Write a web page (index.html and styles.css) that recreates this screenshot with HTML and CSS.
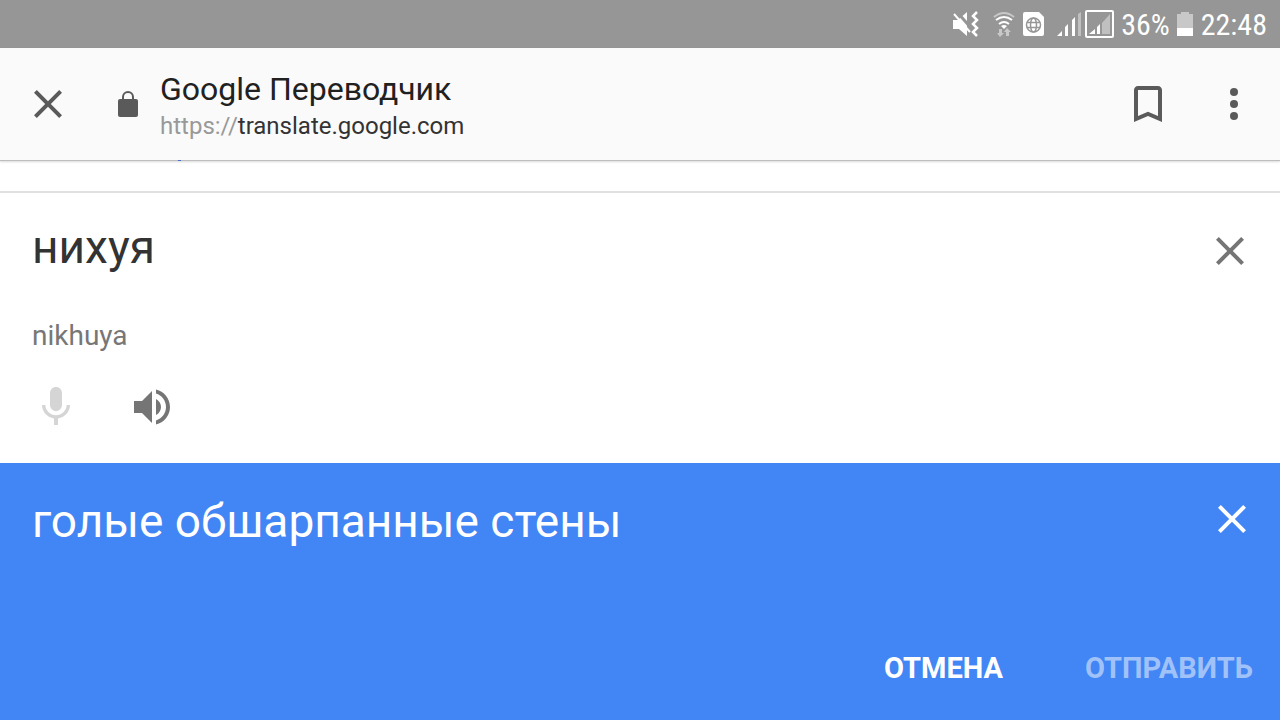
FILE: index.html
```
<!DOCTYPE html>
<html lang="ru">
<head>
    <meta charset="UTF-8">
    <meta name="viewport" content="width=device-width, initial-scale=1">
    <title>Google Переводчик</title>
    <link rel="stylesheet" href="styles.css">
</head>
<body>

    <div class="status">
        <svg class="vibrate" width="28" height="26" viewBox="0 0 28 26">
            <path fill="#fff" d="M1 9h5l9-8v24l-8-7H1z"/>
            <path stroke="#969696" stroke-width="3" d="M5 1l15 17"/>
            <path stroke="#fff" stroke-width="2" d="M2 3l16 18"/>
            <path fill="none" stroke="#fff" stroke-width="2.500" d="M25 1l-4 4 4 4-4 4 4 4-4 4 4 4"/>
        </svg>
        <svg class="wifi" width="22" height="26" viewBox="0 0 22 26" fill="none" stroke="#fff" stroke-width="2">
            <path stroke="#c8c8c8" d="M1 6q10-8 20 0"/>
            <path d="M3 9q8-6 16 0M6 13q5-4 10 0"/>
            <path fill="#fff" stroke="none" d="M8 15q3-2 6 0l-3 3z"/>
            <path fill="#c8c8c8" stroke="none" d="M6 18h3v4h2l-4 4-3-4h2zM13 25h3v-4h2l-4-4-3 4h2z"/>
        </svg>
        <svg class="sim" width="22" height="24" viewBox="0 0 22 24">
            <path fill="#fff" d="M2 0h14l5 5v17q0 2-2 2H2q-2 0-2-2V2q0-2 2-2z"/>
            <g fill="none" stroke="#969696" stroke-width="1.5">
                <circle cx="10.500" cy="13" r="7"/>
                <ellipse cx="10.500" cy="13" rx="3" ry="7"/>
                <path d="M4 10.500h13M4 15.500h13"/>
            </g>
        </svg>
        <svg class="signal" width="26" height="26" viewBox="0 0 26 26">
            <path fill="#fff" d="M0 25l5-5v5zM8 16l3-3v12H8zM15 9l3-3v19h-3z"/>
            <path fill="#c0c0c0" d="M21 3l3-2v24h-3z"/>
        </svg>
        <svg class="signal-box" width="29" height="28" viewBox="0 0 29 28">
            <rect x="1" y="1" width="27" height="26" rx="1" fill="none" stroke="#fff" stroke-width="2"/>
            <path fill="#fff" d="M4 24l6-5v5zM12 17l3-3v10h-3z"/>
            <path fill="#c0c0c0" d="M17 13l8-9v20h-8z"/>
        </svg>
        <span class="percent">36%</span>
        <svg class="battery" width="16" height="24" viewBox="0 0 16 24">
            <path fill="#c8c8c8" d="M4 0h8v2h4v14H0V2h4z"/>
            <path fill="#fff" d="M0 16h16v8H0z"/>
        </svg>
        <span class="time">22:48</span>
    </div>

    <header class="toolbar">
        <button class="icon" aria-label="Закрыть">
            <svg viewBox="0 0 24 24"><path d="M19 6.410L17.590 5 12 10.590 6.410 5 5 6.410 10.590 12 5 17.590 6.410 19 12 13.410 17.590 19 19 17.590 13.410 12z"/></svg>
        </button>
        <svg class="lock" width="20" height="26" viewBox="0 0 20 26">
            <path fill="none" stroke="#5a5a5a" stroke-width="2" d="M5 9V6a5 5 0 0 1 10 0v3"/>
            <rect y="8" width="20" height="18" rx="2" fill="#5a5a5a"/>
        </svg>
        <div class="page">
            <h1>Google Переводчик</h1>
            <p><span>https://</span>translate.google.com</p>
        </div>
        <button class="icon" aria-label="Закладка">
            <svg viewBox="0 0 24 24"><path d="M17 3H7c-1.100 0-2 .9-2 2v16l7-3 7 3V5c0-1.100-.9-2-2-2zm0 15l-5-2.180L7 18V5h10v13z"/></svg>
        </button>
        <button class="icon more" aria-label="Меню">
            <svg viewBox="0 0 24 24"><circle cx="12" cy="6" r="2"/><circle cx="12" cy="12" r="2"/><circle cx="12" cy="18" r="2"/></svg>
        </button>
    </header>

    <div class="strip"></div>

    <section class="source">
        <div class="row">
            <textarea rows="1" aria-label="Исходный текст" spellcheck="false">нихуя</textarea>
            <button class="icon" aria-label="Очистить">
                <svg viewBox="0 0 24 24"><path d="M19 6.410L17.590 5 12 10.590 6.410 5 5 6.410 10.590 12 5 17.590 6.410 19 12 13.410 17.590 19 19 17.590 13.410 12z"/></svg>
            </button>
        </div>
        <p class="translit">nikhuya</p>
        <div class="tools">
            <button class="icon" aria-label="Голосовой ввод" disabled>
                <svg viewBox="0 0 24 24"><path d="M12 14c1.660 0 3-1.340 3-3V5c0-1.660-1.340-3-3-3S9 3.340 9 5v6c0 1.660 1.340 3 3 3zM17.300 11c0 3-2.540 5.100-5.300 5.100S6.700 14 6.700 11H5c0 3.410 2.720 6.230 6 6.720V21h2v-3.280c3.280-.48 6-3.300 6-6.720h-1.700z"/></svg>
            </button>
            <button class="icon" aria-label="Прослушать">
                <svg viewBox="0 0 24 24"><path d="M3 9v6h4l5 5V4L7 9H3zm13.500 3c0-1.770-1.020-3.290-2.500-4.030v8.050c1.480-.73 2.500-2.250 2.500-4.020zM14 3.230v2.060c2.890.86 5 3.540 5 6.710s-2.110 5.850-5 6.710v2.060c4.010-.91 7-4.490 7-8.770s-2.990-7.860-7-8.770z"/></svg>
            </button>
        </div>
    </section>

    <section class="target">
        <div class="row">
            <textarea rows="1" aria-label="Перевод" spellcheck="false">голые обшарпанные стены</textarea>
            <button class="icon" aria-label="Очистить перевод">
                <svg viewBox="0 0 24 24"><path d="M19 6.410L17.590 5 12 10.590 6.410 5 5 6.410 10.590 12 5 17.590 6.410 19 12 13.410 17.590 19 19 17.590 13.410 12z"/></svg>
            </button>
        </div>
        <div class="actions">
            <button>ОТМЕНА</button>
            <button disabled>ОТПРАВИТЬ</button>
        </div>
    </section>

</body>
</html>
```
FILE: styles.css
```
*{
    margin: 0;
    padding: 0;
    box-sizing: border-box;
}
body{
    min-height: 100vh;
    display: flex;
    flex-direction: column;
    font-family: Roboto, "Liberation Sans", sans-serif;
    background: #fff;
}
button{
    border: 0;
    background: none;
    font: inherit;
    cursor: pointer;
}
.icon{
    flex: none;
    width: 48px;
    height: 48px;
    color: #757575;
}
.icon svg{
    display: block;
    fill: currentColor;
}
.status{
    height: 48px;
    display: flex;
    align-items: center;
    justify-content: flex-end;
    padding-right: 13px;
    background: #969696;
    color: #fff;
    font-family: "Roboto Condensed", Roboto, sans-serif;
    font-size: 30px;
    line-height: 48px;
}
.status span{
    padding-top: 2px;
}
.wifi{
    margin-left: 13px;
}
.sim{
    margin-left: 8px;
}
.signal{
    margin-left: 12px;
}
.signal-box{
    margin-left: 2px;
}
.percent{
    margin: 0 7px;
}
.time{
    margin-left: 8px;
}
.toolbar{
    height: 113px;
    display: flex;
    align-items: center;
    padding: 0 22px 0 24px;
    background: #fafafa;
    border-bottom: 1px solid #bdbdbd;
    box-shadow: 0 1px 2px rgba(0,0,0,.15);
}
.toolbar .icon{
    color: #5a5a5a;
}
.lock{
    margin: 0 22px 0 46px;
}
.page{
    flex: 1;
    padding-top: 4px;
}
.page h1{
    font-size: 32px;
    font-weight: 400;
    line-height: 40px;
    color: #212121;
}
.page p{
    font-size: 24px;
    line-height: 34px;
    color: #333;
}
.page p span{
    color: #999;
}
.toolbar .more{
    margin-left: 38px;
}
.strip{
    position: relative;
    height: 32px;
    border-bottom: 2px solid #e0e0e0;
}
/* tail of the link scrolled under the toolbar */
.strip:before{
    content: "";
    position: absolute;
    top: -1px;
    left: 178px;
    width: 3px;
    height: 1px;
    background: #4a6fc8;
}
.row{
    display: flex;
    align-items: flex-start;
}
.row textarea{
    flex: 1;
    height: 56px;
    border: 0;
    outline: 0;
    resize: none;
    overflow: hidden;
    background: none;
    color: inherit;
    font: 46px/56px Roboto, "Liberation Sans", sans-serif;
}
.source{
    padding: 26px 26px 32px 32px;
    color: #333;
}
.source .row .icon{
    margin-top: 8px;
}
.translit{
    margin-top: 45px;
    font-size: 28px;
    line-height: 32px;
    color: #777;
}
.tools{
    display: flex;
    gap: 48px;
    margin-top: 31px;
}
.tools .icon:disabled{
    color: #d5d5d5;
}
.target{
    flex: 1;
    display: flex;
    flex-direction: column;
    justify-content: space-between;
    padding: 30px 24px 28px 32px;
    background: #4285f4;
    color: #fff;
}
.target .icon{
    margin-top: 2px;
    color: #fff;
}
.actions{
    display: flex;
    justify-content: flex-end;
    gap: 82px;
    padding-right: 3px;
}
.actions button{
    font-size: 29px;
    font-weight: 700;
    line-height: 48px;
    color: #fff;
}
.actions button:disabled{
    color: #a0c2f9;
}
```
